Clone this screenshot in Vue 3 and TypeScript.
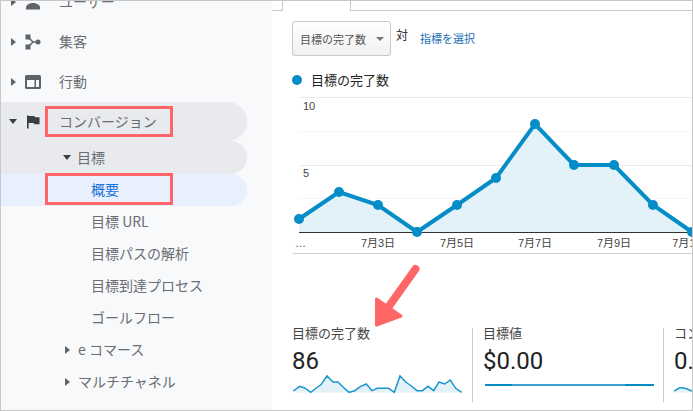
<script setup lang="ts">
interface NavItem {
  label: string
  level: 'sub' | 'leaf'
  caret?: boolean
}

const navItems: NavItem[] = [
  { label: '目標 URL', level: 'leaf' },
  { label: '目標パスの解析', level: 'leaf' },
  { label: '目標到達プロセス', level: 'leaf' },
  { label: 'ゴールフロー', level: 'leaf' },
  { label: 'e コマース', level: 'sub', caret: true },
  { label: 'マルチチャネル', level: 'sub', caret: true },
]

// page coordinates, the svg viewBox starts at the same place
const points: [number, number][] = [
  [299, 219], [339, 192], [378, 205], [417, 232], [457, 205], [496, 178],
  [535, 124], [574, 165], [614, 165], [653, 205], [692, 232],
]
const line = points.map((p) => p.join(',')).join(' ')
const area = `299,232 ${line} 692,232`
const gridLines = [97.5, 131.5, 165.5, 198.5]
const dates = [
  { x: 378, t: '7月3日' },
  { x: 457, t: '7月5日' },
  { x: 535, t: '7月7日' },
  { x: 614, t: '7月9日' },
  { x: 692, t: '7月11日' },
]

const sparkRaw = [
  [66, 407], [85, 393], [100, 398], [118, 411], [135, 398], [150, 387], [167, 362], [185, 380],
  [200, 380], [216, 396], [233, 411], [250, 406], [268, 393], [285, 386], [302, 406], [318, 399],
  [335, 399], [352, 399], [369, 411], [386, 362], [403, 380], [420, 392], [437, 406], [453, 406],
  [470, 393], [487, 406], [503, 380], [520, 386], [537, 374], [553, 399], [571, 411],
]
const spark = sparkRaw.map(([x, y]) => `${((x - 62) / 3).toFixed(1)},${((y - 350) / 3).toFixed(1)}`).join(' ')
const sparkArea = `1.3,20.5 ${spark} 169.7,20.5`
</script>

<template>
  <div class="frame">
    <aside class="sidebar">
      <div class="top-row first-row">
        <span class="caret right"></span>
        <svg class="icon" viewBox="0 0 16 16"><circle cx="8" cy="3.500" r="3.500" /><path d="M1 15.500v-2c0-3 4-4.500 7-4.500s7 1.500 7 4.500v2z" /></svg>
        <span class="top-label">ユーザー</span>
      </div>
      <div class="top-row">
        <span class="caret right"></span>
        <svg class="icon" viewBox="0 0 16 16">
          <path d="M3 3l5 5-5 5M8 8h6" fill="none" stroke="#5f6368" stroke-width="1.500" />
          <rect x="0.500" y="0.500" width="5" height="5" /><rect x="0.500" y="10.500" width="5" height="5" /><circle cx="13" cy="8" r="2.500" />
        </svg>
        <span class="top-label">集客</span>
      </div>
      <div class="top-row">
        <span class="caret right"></span>
        <svg class="icon" viewBox="0 0 16 16">
          <path fill-rule="evenodd" d="M1.500 1h13A1.500 1.500 0 0 1 16 2.500v11a1.500 1.500 0 0 1-1.500 1.500h-13A1.500 1.500 0 0 1 0 13.500v-11A1.500 1.500 0 0 1 1.500 1zM2 6v7h7.500V6zM11 6v7h3V6z" />
        </svg>
        <span class="top-label">行動</span>
      </div>
      <div class="top-row active-group conv">
        <span class="caret down big"></span>
        <svg class="icon flag" viewBox="0 0 14 14"><path d="M0 0h1.800v14H0zM1.800 0.500h6l1 1.500H13.500v7.500H8l-1-1.500H1.800z" /></svg>
        <span class="top-label">コンバージョン</span>
        <span class="mark"></span>
      </div>
      <div class="sub-row active-group">
        <span class="caret down big sub-caret"></span>
        <span>目標</span>
      </div>
      <div class="leaf-row selected">
        概要
        <span class="mark mark-leaf"></span>
      </div>
      <div v-for="item in navItems" :key="item.label" :class="item.level === 'leaf' ? 'leaf-row' : 'sub-row'">
        <span v-if="item.caret" class="caret right sub-right"></span>
        {{ item.label }}
      </div>
    </aside>

    <main class="main">
      <div class="tabs"><div class="tab"></div></div>
      <div class="toolbar">
        <div class="select">目標の完了数<span class="select-caret"></span></div>
        <span class="versus">対</span>
        <a class="pick">指標を選択</a>
      </div>
      <div class="legend"><span class="dot"></span>目標の完了数</div>

      <svg class="chart" viewBox="272 89 420 167" width="420" height="167">
        <line v-for="y in gridLines" :key="y" x1="299" x2="692" :y1="y" :y2="y" :stroke="y === 97.5 || y === 165.5 ? '#ececec' : '#f5f5f5'" />
        <polygon :points="area" fill="#e3f1f8" />
        <line x1="299" x2="692" y1="232.500" y2="232.500" stroke="#333" />
        <polyline :points="line" fill="none" stroke="#058dc7" stroke-width="4" />
        <circle v-for="p in points" :key="p[0]" :cx="p[0]" :cy="p[1]" r="5" fill="#058dc7" />
        <text x="303" y="110" class="axis">10</text>
        <text x="303" y="177" class="axis">5</text>
        <text x="295" y="247" class="axis">…</text>
        <text v-for="d in dates" :key="d.x" :x="d.x" y="247" class="axis" text-anchor="middle">{{ d.t }}</text>
        <line x1="293" x2="692" y1="253.500" y2="253.500" stroke="#d0d0d0" />
      </svg>

      <div class="metrics">
        <div class="tile first">
          <div class="tile-label">目標の完了数</div>
          <div class="tile-value">86</div>
          <svg class="spark" viewBox="0 0 172 22" width="172" height="22">
            <polygon :points="sparkArea" fill="#e3f1f8" />
            <polyline :points="spark" fill="none" stroke="#1b97cd" stroke-width="1.500" />
          </svg>
        </div>
        <div class="tile">
          <div class="tile-label">目標値</div>
          <div class="tile-value">$0.00</div>
          <div class="flat"><span class="dark"></span><span class="mid"></span><span class="dark end"></span></div>
        </div>
        <div class="tile">
          <div class="tile-label">コンバージョン率</div>
          <div class="tile-value">0.00%</div>
          <svg class="spark" viewBox="0 0 172 22" width="172" height="22">
            <polygon points="0,20.500 0,19 6,15.500 12,16.500 18,19 18,20.500" fill="#e3f1f8" />
            <polyline points="0,19 6,15.500 12,16.500 18,19" fill="none" stroke="#1b97cd" stroke-width="1.500" />
          </svg>
        </div>
      </div>
    </main>

    <svg class="arrow" viewBox="0 0 60 70" width="60" height="70">
      <path d="M42.500 6L14 46" stroke="#ff6666" stroke-width="8" stroke-linecap="round" fill="none" />
      <path d="M3.500 62V36L28 53z" fill="#ff6666" stroke="#ff6666" stroke-width="3" stroke-linejoin="round" />
    </svg>
  </div>
</template>

<style scoped>
.frame {
  position: relative;
  display: flex;
  width: 693px;
  height: 411px;
  box-sizing: border-box;
  border: 1px solid #c8c8c8;
  overflow: hidden;
  font-family: "Noto Sans CJK JP", Roboto, sans-serif;
  background: #fff;
}
.sidebar {
  flex: 0 0 271px;
  background: #f8f9fb;
  color: #6a6d72;
  font-size: 14px;
}
.top-row {
  position: relative;
  display: flex;
  align-items: center;
  height: 40px;
  width: 246px;
  padding-left: 10px;
  box-sizing: border-box;
}
.first-row {
  margin-top: -19px;
}
.caret {
  width: 0;
  height: 0;
  flex: none;
}
.caret.right {
  border-top: 4px solid transparent;
  border-bottom: 4px solid transparent;
  border-left: 5px solid #5f6368;
}
.caret.down {
  border-left: 4px solid transparent;
  border-right: 4px solid transparent;
  border-top: 5px solid #3c4043;
}
.caret.big {
  margin-left: -2px;
}
.icon {
  width: 16px;
  height: 16px;
  margin-left: 9px;
  fill: #5f6368;
  flex: none;
}
.flag {
  width: 13px;
  height: 14px;
  margin-left: 10px;
  fill: #3c4043;
}
.top-label {
  margin-left: 18px;
  padding-bottom: 2px;
}
.conv .top-label {
  margin-left: 19px;
}
.active-group {
  background: #e8eaed;
}
.conv {
  height: 39px;
  border-radius: 0 20px 20px 0;
}
.sub-row {
  position: relative;
  display: flex;
  align-items: center;
  height: 32px;
  width: 246px;
  padding: 0 0 2px 64px;
  box-sizing: border-box;
}
.sub-row .caret {
  margin-top: 2px;
}
.sub-row.active-group {
  height: 33px;
  padding-left: 64px;
  border-radius: 0 17px 17px 0;
}
.sub-caret {
  margin: 0 6px 0 1px;
}
.sub-right {
  margin-right: 8px;
}
.leaf-row {
  position: relative;
  display: flex;
  align-items: center;
  height: 32px;
  width: 246px;
  padding: 0 0 2px 90px;
  box-sizing: border-box;
}
.selected {
  background: #e8f0fe;
  color: #1a6fd8;
  border-radius: 0 16px 16px 0;
}
.mark {
  position: absolute;
  left: 44px;
  top: 4px;
  width: 128px;
  height: 31px;
  box-sizing: border-box;
  border: 3px solid #ff6468;
}
.mark-leaf {
  top: -1px;
  height: 32px;
}
.main {
  flex: 1;
  min-width: 0;
  overflow: hidden;
}
.tabs {
  height: 9px;
  border-bottom: 1px solid #c8c8c8;
}
.tab {
  width: 67px;
  height: 10px;
  margin-left: 10px;
  background: #fff;
  border: 1px solid #c8c8c8;
  border-top: 0;
  border-bottom: 0;
}
.toolbar {
  display: flex;
  align-items: flex-start;
  margin: 10px 0 0 20px;
  height: 35px;
}
.select {
  display: flex;
  align-items: center;
  width: 99px;
  height: 35px;
  box-sizing: border-box;
  padding-left: 7px;
  border: 1px solid #c8c8c8;
  border-radius: 3px;
  background: linear-gradient(#fff, #f1f1f1);
  color: #555;
  font-size: 11px;
}
.select-caret {
  margin-left: 10px;
  border-left: 4px solid transparent;
  border-right: 4px solid transparent;
  border-top: 4px solid #777;
}
.versus {
  margin: 5px 0 0 5px;
  font-size: 12px;
  line-height: 18px;
  color: #222;
}
.pick {
  margin: 8px 0 0 12px;
  font-size: 11px;
  line-height: 18px;
  color: #1a6fb5;
}
.legend {
  display: flex;
  align-items: center;
  height: 16px;
  padding-bottom: 2px;
  margin: 15px 0 0 20px;
  font-size: 13px;
  color: #222;
}
.dot {
  width: 10px;
  height: 10px;
  margin: 2px 9px 0 0;
  border-radius: 50%;
  background: #058dc7;
}
.chart {
  display: block;
}
.axis {
  font-family: "Liberation Sans", "Noto Sans CJK JP", sans-serif;
  font-size: 11px;
  fill: #444;
}
.metrics {
  display: flex;
  margin: 72px 0 0 20px;
  height: 74px;
}
.tile {
  flex: 0 0 191px;
  box-sizing: border-box;
  padding-left: 10px;
  border-right: 1px solid #ccc;
  color: #333;
  white-space: nowrap;
}
.tile.first {
  flex-basis: 181px;
  padding-left: 0;
}
.tile-label {
  font-size: 13px;
  line-height: 14px;
  margin-top: -2px;
  color: #444;
}
.tile-value {
  font-family: Roboto, sans-serif;
  font-size: 24px;
  line-height: 28px;
  margin-top: 7px;
  color: #222;
}
.spark {
  display: block;
  margin-top: -3px;
}
.flat {
  display: flex;
  width: 169px;
  height: 2px;
  margin: 9px 0 0 2px;
}
.flat .dark {
  width: 27px;
  background: #058dc7;
}
.flat .mid {
  flex: 1;
  background: #3ba1d3;
}
.flat .end {
  width: 29px;
}
.arrow {
  position: absolute;
  left: 372px;
  top: 262px;
}
</style>

<style>
html, body {
  margin: 0;
}
</style>
